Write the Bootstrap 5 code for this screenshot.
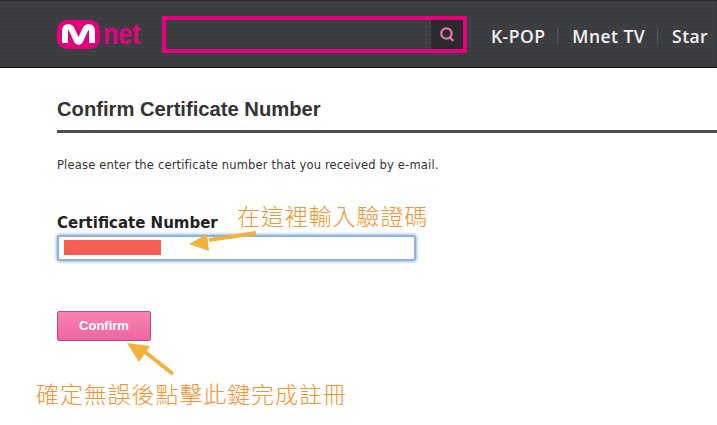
<!DOCTYPE html>
<html lang="en">
<head>
<meta charset="utf-8">
<title>Confirm Certificate Number</title>
<link rel="stylesheet" href="https://cdn.jsdelivr.net/npm/bootstrap@5.3.0/dist/css/bootstrap.min.css">
<style>
html,body{height:425px;overflow:hidden;background:#fff}
body{position:relative;font-family:"DejaVu Sans",sans-serif;color:#222}
.topbar{height:68px;background-color:#3b3c40;background-image:radial-gradient(#46474b 0.6px,transparent 0.8px);background-size:4px 4px;border-top:1px solid #2a2a2c;border-bottom:1px solid #111;padding-left:57px;overflow:hidden;white-space:nowrap}
.logo-word{font-family:"Liberation Sans",sans-serif;font-size:29px;font-weight:700;color:#e5007f;margin-left:3px;line-height:28px;transform:scaleX(.86);transform-origin:left;width:38px}
.search-frame{width:305px;height:37px;border:4px solid #e5007f;margin-left:21px;flex:none}
.search-btn{width:32px;background:#2a2a2d}
.menu-item{font-family:"Open Sans",sans-serif;font-weight:600;font-size:17.5px;color:#f2f2f2;letter-spacing:.45px;line-height:20px}
.menu-sep{width:1px;height:14px;background:#56575b;margin:0 14px 0 12px}
.menu-box{margin-left:24px;padding-top:3px}
.page-body{padding:0 0 0 57px}
.page-title{font-family:"Liberation Sans",sans-serif;font-weight:700;font-size:20.2px;line-height:22px;color:#333;margin:30px 0 0;padding-bottom:10px;border-bottom:3px solid #4f4f4f}
.intro{font-size:11.5px;letter-spacing:.18px;line-height:14px;color:#333;margin:25px 0 0}
.cert-label{font-size:15px;font-weight:700;line-height:18px;color:#222;margin:42px 0 0;display:block}
.cert-input{width:359px;height:26px;margin-top:3px;border:2px solid #8fb3dc;border-radius:3px;box-shadow:0 0 3px 1px #9dbde3;padding:3px 5px;background:#fff}
.redact{width:97px;height:15px;background:#f65e53}
.confirm-btn{width:94px;height:30px;margin-top:50px;border:1px solid #b84c80;border-radius:2px;background:linear-gradient(#f884b5,#ef659f);color:#fff;font-family:"Liberation Sans",sans-serif;font-weight:700;font-size:13px;padding:0;display:block;line-height:26px}
.note{position:absolute;font-family:"Noto Sans CJK TC",sans-serif;font-weight:300;color:#f7932e;font-size:23px;line-height:26px;white-space:nowrap;letter-spacing:.9px}
.note-a{left:237px;top:202px}
.note-b{left:36px;top:380px}
.arrows{position:absolute;left:0;top:0}
</style>
</head>
<body>
<header class="topbar d-flex align-items-center">
  <svg width="43" height="29" viewBox="0 0 43 29" class="flex-shrink-0" aria-label="Mnet logo">
    <rect width="43" height="29" rx="10" fill="#e5007f"/>
    <path d="M8 23V11c0-5 5-5 7-1l4.500 10c1 2.500 3 2.500 4 0L28 10c2-4 7-4 7 1v12" fill="none" stroke="#fff" stroke-width="6"/>
  </svg>
  <div class="logo-word">net</div>
  <div class="search-frame d-flex justify-content-end">
    <div class="search-btn d-flex align-items-center justify-content-center">
      <svg width="16" height="16" viewBox="0 0 14 14"><circle cx="6.500" cy="6.500" r="4.500" fill="none" stroke="#e874a8" stroke-width="2"/><path d="M9.500 10l2.500 2.500" stroke="#e874a8" stroke-width="2" stroke-linecap="round"/></svg>
    </div>
  </div>
  <nav class="menu-box d-flex align-items-center">
    <span class="menu-item">K-POP</span><span class="menu-sep"></span>
    <span class="menu-item">Mnet TV</span><span class="menu-sep"></span>
    <span class="menu-item">Star</span>
  </nav>
</header>
<main class="page-body">
  <h1 class="page-title">Confirm Certificate Number</h1>
  <p class="intro">Please enter the certificate number that you received by e-mail.</p>
  <label class="cert-label">Certificate Number</label>
  <div class="cert-input"><div class="redact"></div></div>
  <button type="button" class="confirm-btn">Confirm</button>
</main>
<svg class="arrows" width="717" height="425" viewBox="0 0 717 425">
  <path d="M256 233L209 240" stroke="#f2b33d" stroke-width="4"/>
  <path d="M189 244L207 234L209 251Z" fill="#f2b33d"/>
  <path d="M173 374L145 352" stroke="#f2b33d" stroke-width="4"/>
  <path d="M127 343L150 346L139 362Z" fill="#f2b33d"/>
</svg>
<div class="note note-a">在這裡輸入驗證碼</div>
<div class="note note-b">確定無誤後點擊此鍵完成註冊</div>
</body>
</html>
